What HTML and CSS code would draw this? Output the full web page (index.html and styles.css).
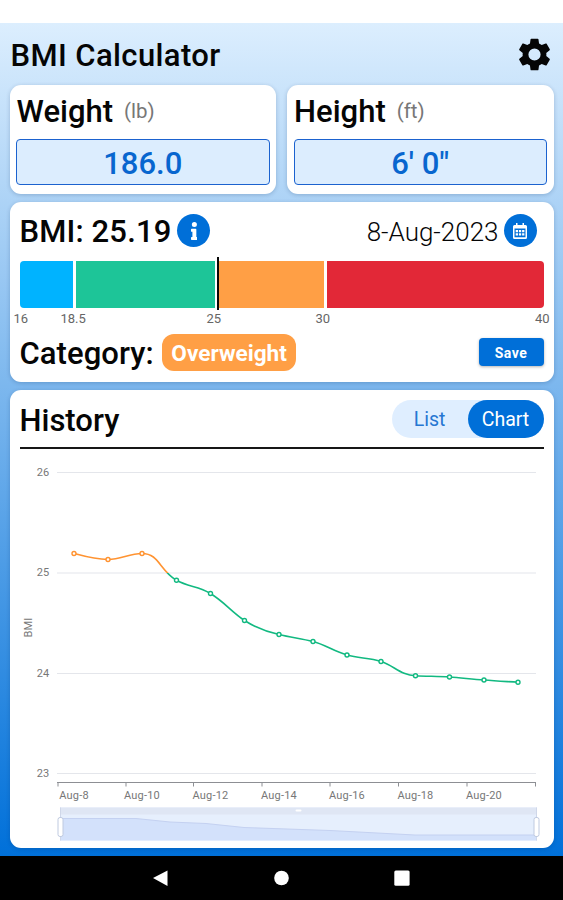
FILE: index.html
```
<!DOCTYPE html>
<html lang="en">
<head>
<meta charset="utf-8">
<title>BMI Calculator</title>
<link rel="stylesheet" href="styles.css">
</head>
<body>
<div class="status-bar"></div>
<main class="app">
  <header class="header">
    <h1>BMI Calculator</h1>
    <svg class="gear" viewBox="2 2 20 20"><path fill-rule="evenodd" d="M19.14 12.94c.04-.3.06-.61.06-.94 0-.32-.02-.64-.07-.94l2.03-1.58c.18-.14.23-.41.12-.61l-1.92-3.32c-.12-.22-.37-.29-.59-.22l-2.39.96c-.5-.38-1.03-.7-1.62-.94L14.4 2.81c-.04-.24-.24-.41-.48-.41h-3.84c-.24 0-.43.17-.47.41L9.25 5.35c-.59.24-1.13.57-1.62.94l-2.39-.96c-.22-.08-.47 0-.59.22L2.74 8.87c-.12.21-.08.47.12.61l2.03 1.58c-.05.3-.09.63-.09.94s.02.64.07.94l-2.03 1.58c-.18.14-.23.41-.12.61l1.92 3.32c.12.22.37.29.59.22l2.39-.96c.5.38 1.03.7 1.62.94l.36 2.54c.05.24.24.41.48.41h3.84c.24 0 .44-.17.47-.41l.36-2.54c.59-.24 1.13-.56 1.62-.94l2.39.96c.22.08.47 0 .59-.22l1.92-3.32c.12-.22.07-.47-.12-.61zM12 15.700a3.700 3.700 0 1 1 0-7.400 3.700 3.700 0 0 1 0 7.400z"/></svg>
  </header>

  <section class="inputs">
    <div class="card measure">
      <h2>Weight <span class="unit">(lb)</span></h2>
      <div class="field">186.0</div>
    </div>
    <div class="card measure">
      <h2>Height <span class="unit">(ft)</span></h2>
      <div class="field">6' 0"</div>
    </div>
  </section>

  <section class="card result">
    <div class="result-top">
      <h2 class="score">BMI: 25.19</h2>
      <span class="round"><svg class="info" viewBox="0 0 192 512"><path d="M20 424.2h20V279.8H20c-11 0-20-9-20-20V212c0-11 9-20 20-20h112c11 0 20 9 20 20v212.200h20c11 0 20 9 20 20V492c0 11-9 20-20 20H20c-11 0-20-9-20-20v-47.800c0-11 9-20 20-20zM96 0a72 72 0 1 0 0 144A72 72 0 0 0 96 0z"/></svg></span>
      <span class="date">8-Aug-2023</span>
      <span class="round"><svg class="calendar" viewBox="0 0 14 16"><path fill-rule="evenodd" d="M3 0h1.500v2h5V0H11v2h1.500A1.500 1.500 0 0 1 14 3.500v11a1.500 1.500 0 0 1-1.500 1.500h-11A1.500 1.500 0 0 1 0 14.500v-11A1.500 1.500 0 0 1 1.500 2H3zM1.500 5.500v8.800h11V5.500z"/><path d="M2.700 7h2.300v2.300H2.700zM5.900 7h2.300v2.300H5.900zM9.100 7h2.300v2.300H9.100zM2.700 10.300h2.300v2.300H2.700zM5.900 10.300h2.300v2.300H5.900zM9.100 10.300h2.300v2.300H9.100z"/></svg></span>
    </div>
    <div class="scale">
      <div class="band under"></div>
      <div class="band normal"></div>
      <div class="band over"></div>
      <div class="band obese"></div>
      <div class="marker"></div>
    </div>
    <div class="ticks">
      <span>16</span><span>18.5</span><span>25</span><span>30</span><span>40</span>
    </div>
    <div class="category">
      <h2>Category:</h2>
      <span class="badge">Overweight</span>
      <button class="save">Save</button>
    </div>
  </section>

  <section class="card history">
    <div class="history-head">
      <h2>History</h2>
      <div class="toggle"><span class="option">List</span><span class="option active">Chart</span></div>
    </div>
    <svg class="chart" viewBox="10 448.500 544 399">
      <defs>
        <linearGradient id="level" gradientUnits="userSpaceOnUse" x1="0" y1="552" x2="0" y2="592">
          <stop offset="0.5" stop-color="#ff9331"/><stop offset="0.5" stop-color="#12b981"/>
        </linearGradient>
      </defs>
      <g class="grid"><path d="M57 472H536M57 572.500H536M57 673H536M57 773H536"/></g>
      <path class="axis" d="M57 782H536M58 782v4M126 782v4M193.500 782v4M262 782v4M330 782v4M398.500 782v4M467 782v4M535.500 782v4"/>
      <g class="label ylabel">
        <text x="49.500" y="475.300">26</text><text x="49.500" y="575.800">25</text><text x="49.500" y="676.300">24</text><text x="49.500" y="776.800">23</text>
      </g>
      <text class="label" text-anchor="middle" transform="translate(31.500 627) rotate(-90)">BMI</text>
      <g class="label xlabel">
        <text x="74" y="798.500">Aug-8</text><text x="142" y="798.500">Aug-10</text><text x="210.500" y="798.500">Aug-12</text><text x="279" y="798.500">Aug-14</text><text x="347" y="798.500">Aug-16</text><text x="415.500" y="798.500">Aug-18</text><text x="484" y="798.500">Aug-20</text>
      </g>
      <path class="line" stroke="url(#level)" d="M74 553C85 556 95 559 108 559C121 559 129 553 142 553C159 553 159 569 176 579.500C189 587 198 585 210.500 593C225 602 231 611 244.500 620C257 628 266 631 279 634C291 637 301 638 313 641C325 644 334 651 347 654.500C359 658 369 657 381 661C394 665 401 675 415.500 675.200C427 676 438 675.500 449.500 676.500C461 677 472 679 484 679.500C496 680.500 507 681 518 681.700"/>
      <g class="dots over-dots"><circle cx="74" cy="553" r="2"/><circle cx="108" cy="559" r="2"/><circle cx="142" cy="553" r="2"/></g>
      <g class="dots"><circle cx="176.500" cy="579.700" r="2"/><circle cx="210.500" cy="593" r="2"/><circle cx="244.500" cy="620" r="2"/><circle cx="279" cy="634" r="2"/><circle cx="313" cy="641" r="2"/><circle cx="347" cy="654.500" r="2"/><circle cx="381" cy="661" r="2"/><circle cx="415.500" cy="675.200" r="2"/><circle cx="449.500" cy="676.500" r="2"/><circle cx="484" cy="679.500" r="2"/><circle cx="518" cy="681.700" r="2"/></g>
      <rect x="60" y="807" width="477" height="33" fill="#e6effd"/>
      <rect x="60" y="807" width="477" height="7" fill="#dfe6f4"/>
      <path d="M60 818H136L170 821.500L206 823L244 827L330 830L415 834.500H537V840H60z" fill="#d3e1fb"/>
      <path d="M60 818H136L170 821.500L206 823L244 827L330 830L415 834.500H537" fill="none" stroke="#c4d1f1"/>
      <rect x="295.500" y="809" width="6" height="2" rx="1" fill="#fff"/>
      <path d="M60.500 807v33M536.500 807v33" stroke="#cfd7e9"/>
      <g fill="#fff" stroke="#bfcae0"><rect x="58" y="817" width="5" height="19" rx="2"/><rect x="534" y="817" width="5" height="19" rx="2"/></g>
    </svg>
  </section>
</main>
<nav class="nav-bar">
  <svg viewBox="0 0 563 44"><path d="M153 22L167.500 14.500V30z"/><circle cx="281.500" cy="22" r="7.300"/><rect x="394.300" y="14.500" width="15.300" height="15.300" rx="1.500"/></svg>
</nav>
</body>
</html>
```
FILE: styles.css
```
* { box-sizing: border-box; }
body {
  margin: 0;
  width: 563px;
  height: 900px;
  overflow: hidden;
  display: flex;
  flex-direction: column;
  background: #fff;
  color: #050505;
  font-family: Roboto, sans-serif;
}
h1, h2 { margin: 0; font-size: 31px; font-weight: 500; line-height: 36px; white-space: nowrap; }
h1 { padding-top: 3px; letter-spacing: .4px; }
.status-bar { height: 23px; flex: none; }
.app {
  height: 833px;
  flex: none;
  padding: 0 9.500px;
  background: linear-gradient(#dceefe, #0070d9);
}
.header {
  height: 62px;
  display: flex;
  align-items: center;
  justify-content: space-between;
  padding: 0 3px 0 1px;
}
.gear { width: 33px; height: 33px; fill: #050505; }
.card {
  background: #fff;
  border-radius: 11px;
  box-shadow: 0 1px 4px rgba(0, 40, 90, .22);
}
.inputs { display: grid; grid-template-columns: 1fr 1fr; gap: 11px; height: 109px; }
.measure { padding: 9px 6.500px 0; }
.measure h2 { height: 36px; display: flex; padding-left: .6px; }
.unit { margin-left: 11px; font-size: 20.500px; line-height: 35px; font-weight: 400; color: #777; }
.field {
  height: 46px;
  margin-top: 9px;
  border: 1.500px solid #1b62cf;
  border-radius: 4px;
  background: #dcedfe;
  color: #0866cf;
  font-size: 31px;
  font-weight: 500;
  line-height: 48px;
  text-align: center;
}
.result { height: 180px; margin-top: 8px; padding: 11px 10px 0; }
.result-top { height: 36px; display: flex; align-items: center; }
.score { padding-top: 2px; letter-spacing: .15px; }
.round {
  width: 33px;
  height: 33px;
  margin-top: -1px;
  border-radius: 50%;
  background: #006fd8;
  display: flex;
  align-items: center;
  justify-content: center;
}
.score + .round { margin-left: 6px; }
.round svg { fill: #fff; }
.info { height: 18px; }
.calendar { height: 16px; }
.date { margin-left: auto; margin-right: 5px; padding-top: 1px; font-size: 26px; font-weight: 300; }
.date + .round { margin-right: 7px; }
.scale {
  position: relative;
  display: grid;
  grid-template-columns: 53.500px 139.500px 106.500px 1fr;
  gap: 2.500px;
  height: 47px;
  margin-top: 12px;
}
.band:first-child { border-radius: 4px 0 0 4px; }
.under { background: #00b3ff; }
.normal { background: #1dc598; }
.over { background: #ff9f45; }
.obese { background: #e22837; border-radius: 0 4px 4px 0; }
.marker { position: absolute; left: 197px; top: -4px; width: 2.500px; height: 53px; background: #080808; }
.ticks {
  display: grid;
  grid-template-columns: 47px 146px 109px 1fr auto;
  height: 20px;
  margin: 2px -6px 0;
  font-size: 13px;
  line-height: 18px;
  color: #666;
}
.category { display: flex; align-items: center; height: 38px; margin-top: 3px; }
.category h2 { padding-top: 3px; letter-spacing: .08px; }
.badge {
  height: 37px;
  margin-left: 8px;
  padding: 0 9.500px;
  border-radius: 12px;
  background: #ff9f45;
  color: #fff;
  font-size: 22.600px;
  font-weight: 700;
  line-height: 39px;
}
.save {
  width: 65px;
  height: 28px;
  margin-left: auto;
  padding: 0;
  border: 0;
  border-radius: 4px;
  background: #006fd8;
  box-shadow: 0 1px 3px rgba(0, 0, 0, .3);
  color: #fff;
  font: 700 14px/30px Roboto, sans-serif;
  letter-spacing: .5px;
}
.history { height: 458.500px; margin-top: 7.500px; }
.history-head {
  height: 59px;
  margin: 0 10px;
  border-bottom: 2px solid #161616;
  display: flex;
  align-items: center;
  justify-content: space-between;
}
.history-head h2 { margin-top: 5px; }
.toggle { display: flex; height: 38px; margin-top: 1px; border-radius: 19px; background: #dfeeff; font-size: 19.500px; line-height: 40px; }
.option { width: 76px; text-align: center; color: #2676d2; }
.active { border-radius: 19px; background: #006fd8; color: #fff; }
.chart { display: block; width: 544px; height: 399px; }
.grid path { fill: none; stroke: #e4e6eb; stroke-width: 1.200; }
.axis { fill: none; stroke: #8d8f94; }
.label { font-size: 11px; letter-spacing: .2px; fill: #777; }
.ylabel { text-anchor: end; }
.xlabel { text-anchor: middle; }
.line { fill: none; stroke-width: 1.600; }
.dots { fill: #fff; stroke: #12b981; stroke-width: 1.400; }
.over-dots { stroke: #ff9331; }
.nav-bar { height: 44px; background: #000; }
.nav-bar svg { display: block; width: 563px; height: 44px; fill: #fff; }
```
